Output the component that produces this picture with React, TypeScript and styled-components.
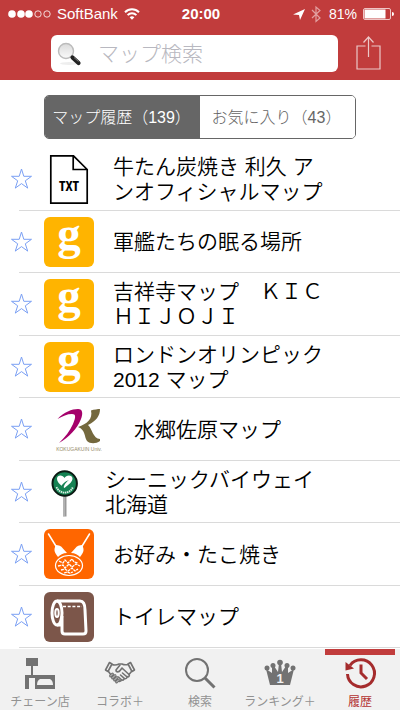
import React, { useState } from "react";
import styled, { createGlobalStyle } from "styled-components";

const FONT = `"Liberation Sans", "Noto Sans CJK JP", sans-serif`;
const RED = "#c13c3c";
const GRAY = "#666666";

const GlobalStyle = createGlobalStyle`
  *, *::before, *::after { box-sizing: border-box; }
  body { margin: 0; background: #fff; font-family: ${FONT}; }
  button, input { font: inherit; }
  svg { display: block; overflow: visible; }
`;

const Page = styled.div`
  min-height: 100vh;
  display: flex;
  flex-direction: column;
  background: #fff;
`;

const Header = styled.header`
  background: ${RED};
  height: 80px;
`;

const StatusBar = styled.div`
  height: 27px;
  padding: 0 6px 0 8px;
  display: grid;
  grid-template-columns: 1fr auto 1fr;
  align-items: center;
  color: #fff;
  font-size: 15px;
`;

const StatusGroup = styled.div<{ $end?: boolean }>`
  display: flex;
  align-items: center;
  gap: 6px;
  justify-content: ${(p) => (p.$end ? "flex-end" : "flex-start")};
`;

const Clock = styled.time`
  font-weight: 700;
`;

const Battery = styled.span`
  font-size: 14px;
`;

const SearchRow = styled.div`
  display: flex;
  align-items: center;
  gap: 18px;
  padding: 8px 19px 0 51px;
`;

const SearchBox = styled.label`
  flex: 1;
  min-width: 0;
  height: 37px;
  display: flex;
  align-items: center;
  gap: 17px;
  padding-left: 6px;
  background: #fff;
  border-radius: 6px;
`;

const SearchInput = styled.input`
  flex: 1;
  min-width: 0;
  height: 32px;
  border: 0;
  padding: 0;
  outline: 0;
  background: transparent;
  font-size: 21px;
  font-weight: 300;
  &::placeholder { color: #b8b8c0; opacity: 1; }
`;

const PlainButton = styled.button`
  border: 0;
  padding: 0;
  background: transparent;
  cursor: pointer;
`;

const Segments = styled.div`
  margin: 15px 44px 9px;
  height: 44px;
  display: flex;
  border: 1px solid ${GRAY};
  border-radius: 5px;
  overflow: hidden;
`;

const Segment = styled.button<{ $active: boolean }>`
  flex: 1;
  border: 0;
  padding: 0 2px 3px 0;
  white-space: nowrap;
  font-size: 16px;
  font-weight: 300;
  cursor: pointer;
  background: ${(p) => (p.$active ? GRAY : "#fff")};
  color: ${(p) => (p.$active ? "#fff" : GRAY)};
`;

const List = styled.ul`
  flex: 1;
  margin: 0;
  padding: 0 0 1px;
  list-style: none;
  display: grid;
  grid-auto-rows: 1fr;
`;

const Row = styled.li`
  min-height: 60px;
  display: flex;
  align-items: center;
  padding-left: 11px;
  background: linear-gradient(#dadada, #dadada) 19px 100% / 100% 1px no-repeat;
`;

const StarButton = styled(PlainButton)`
  width: 33px;
`;

const Thumb = styled.div<{ $narrow?: boolean }>`
  width: ${(p) => (p.$narrow ? 42 : 50)}px;
  height: 50px;
  flex: none;
`;

const Title = styled.a`
  margin-left: 19px;
  color: #000;
  text-decoration: none;
  white-space: pre;
  font-size: 21px;
  font-weight: 350;
  line-height: 25px;
`;

const TabBar = styled.nav`
  height: 61px;
  display: flex;
  background: #f1f1f1;
`;

const Tab = styled.button<{ $active: boolean }>`
  flex: 1;
  min-width: 0;
  border: 0;
  padding: 2px 0 0;
  display: flex;
  flex-direction: column;
  align-items: center;
  gap: 4px;
  white-space: nowrap;
  font-size: 12px;
  line-height: 18px;
  cursor: pointer;
  color: ${(p) => (p.$active ? "#b33232" : "#929292")};
  background: ${(p) =>
    p.$active ? `linear-gradient(${RED}, ${RED}) 50% 0 / 70px 6px no-repeat` : "transparent"};
`;

const TabIcon = styled.span<{ $active: boolean }>`
  padding-top: 6px;
  color: ${(p) => (p.$active ? "#a52c2d" : "#727272")};
`;

const SignalIcon = () => (
  <svg width="43" height="9" viewBox="0 0 43 9" fill="none" stroke="#fff" aria-hidden="true">
    {[4, 13, 21].map((x) => (
      <circle key={x} cx={x} cy="5" r="3.8" fill="#fff" stroke="none" />
    ))}
    <circle cx="30" cy="5" r="3.2" strokeWidth=".8" />
    <circle cx="39" cy="5" r="3.2" strokeWidth=".8" />
  </svg>
);

const WifiIcon = () => (
  <svg width="16" height="12" viewBox="0 0 16 12" fill="none" stroke="#fff" strokeWidth="2" aria-hidden="true">
    <path d="M1 4.2a10 10 0 0 1 14 0M3.6 7.1a6.3 6.3 0 0 1 8.8 0" />
    <path d="m8 11.8-2.4-2.6a3.6 3.6 0 0 1 4.8 0z" fill="#fff" stroke="none" />
  </svg>
);

const StatusIcons = () => (
  <svg width="29" height="16" viewBox="0 0 29 16" fill="none" aria-hidden="true">
    <path d="M11 3 6 14 5 9 -1 8.500z" fill="#fff" />
    <path d="m18 4 8 8-4 3.500V1l4 3.500-8 7.500" stroke="#e2a0a0" strokeWidth="1.200" />
  </svg>
);

const BatteryIcon = () => (
  <svg width="31" height="12" viewBox="0 0 31 12" aria-hidden="true">
    <rect x=".5" y=".5" width="27" height="11" rx="1.500" fill="none" stroke="#efc5c5" />
    <rect x="1.500" y="1.500" width="21" height="9" fill="#fff" />
    <path d="M29 4q2 0 2 2t-2 2z" fill="#fff" />
  </svg>
);

const Magnifier = () => (
  <svg width="24" height="24" viewBox="0 0 24 24" aria-hidden="true">
    <defs>
      <linearGradient id="lens" x1="0" y1="0" x2="0" y2="1">
        <stop offset="0" stopColor="#dadada" />
        <stop offset="1" stopColor="#fafafa" />
      </linearGradient>
    </defs>
    <ellipse cx="12" cy="21.500" rx="9" ry="1.500" fill="#eee" />
    <path d="m14 14 3 3" stroke="#888" strokeWidth="2" />
    <circle cx="9" cy="9" r="7.500" fill="url(#lens)" stroke="#bbb" strokeWidth="1.400" />
    <path d="m15.500 15.500 6 5.500" stroke="#222" strokeWidth="4.200" strokeLinecap="round" />
    <path d="m17 15.500 4.500 4" stroke="#888" strokeWidth=".8" />
  </svg>
);

const ShareIcon = () => (
  <svg width="25" height="34" viewBox="0 0 25 34" fill="none" stroke="#ecc8c8" strokeWidth="1.200" aria-hidden="true">
    <path d="M9.500 9H1v23h23V9h-8.500M12.500 20V0M7.500 5.500l5-5.500 5 5.500" />
  </svg>
);

const StarIcon = () => (
  <svg width="21" height="20" viewBox="0 0 21 20" fill="none" stroke="#7ba0f4" strokeWidth="1" aria-hidden="true">
    <path d="m10.500 0 2.300 7.300h7.700l-6.200 4.500 2.400 7.300-6.200-4.500-6.200 4.500 2.400-7.300L.5 7.300h7.700z" />
  </svg>
);

const TextFileArt = () => (
  <svg width="50" height="50" viewBox="0 0 50 50" aria-hidden="true">
    <path d="M6.800 1.800H29.500L43.200 15.500V49.200H6.800zM29.200 2v13.500H43" fill="#fff" stroke="#000" strokeWidth="1.700" />
    <text x="25" y="37" textAnchor="middle" fontFamily="'Liberation Sans Narrow', 'Open Sans Condensed', 'DejaVu Sans Condensed', sans-serif" fontSize="15" fontWeight="700">TXT</text>
  </svg>
);

const GArt = () => (
  <svg width="50" height="50" viewBox="0 0 50 50" aria-hidden="true">
    <rect width="50" height="50" rx="6" fill="#ffb400" />
    <text x="25" y="32" textAnchor="middle" fontFamily="'Liberation Serif', serif" fontSize="47" fontWeight="700" fill="#fff">g</text>
  </svg>
);

const UniversityArt = () => (
  <svg width="50" height="50" viewBox="0 0 50 50" aria-hidden="true">
    <path d="M13.500 15C20 8 28 5 34 5c5 0 5 5 3 10-4 10-12 18-22 24 6-6 11-12 14-19 3-7 3-10-1-10-5 0-9 2-14.500 5z" fill="#a5006b" />
    <path d="M47 6.500c3-1 7-1.500 9-1.500 0 7-4 12-12 16 4 3 5 14 12 14v2c-4 3-10 3-13 0-3-4-1-11-9-14 9-3 15-8 13-16.500z" fill="#74683d" />
    <text x="35" y="47" textAnchor="middle" fontFamily="'Liberation Sans', sans-serif" fontSize="5" fill="#958a69">KOKUGAKUIN Univ.</text>
  </svg>
);

const BywayArt = () => (
  <svg width="42" height="50" viewBox="0 0 42 50" aria-hidden="true">
    <path d="M19 29h3.500v20.500H19z" fill="#999" />
    <path d="M20 29v20" stroke="#ccc" />
    <circle cx="20.700" cy="16.500" r="12.200" fill="#158253" stroke="#0b1a13" strokeWidth="2" />
    <path d="M20.500 21C15 17 13 14.500 13 11.500c0-4 6-4 7.500-.5 1.500-3.500 8-3.500 8 .5 0 3-3 5.500-8 9.500z" fill="#fff" />
    <path d="M16 22c2-5 4-7 9-9-4 3-5 5-6 10z" fill="#158253" />
    <path d="M12.500 20c3 7 13 8 16.500 0" fill="none" stroke="#d7eee2" strokeWidth="1.800" strokeDasharray="1.500 .6" />
  </svg>
);

const OkonomiyakiArt = () => (
  <svg width="50" height="50" viewBox="0 0 50 50" fill="none" stroke="#fff" aria-hidden="true">
    <rect width="50" height="50" rx="6" fill="#ff6600" stroke="none" />
    <path d="m4.500 5 8 13M45.500 5l-8 13" strokeWidth="1.500" strokeLinecap="round" />
    <path d="M11.500 16c3 0 6 1 7 3l4.500 5c-4 0-7 2-9 4-2-3-4-5-3.500-8zM38.500 16c-3 0-6 1-7 3L27 24c4 0 7 2 9 4 2-3 4-5 3.500-8z" fill="#fff" stroke="none" />
    <ellipse cx="25" cy="36.500" rx="13.500" ry="10" strokeWidth="1.200" />
    <path d="m15 32 4 2 2-3 3 3 4-4 2 3 4 1M14 37l5-1 2 3 4-4 3 3 4-3 4 2M17 41l4-1 3 2 4-3 3 3 3-2M20 44l3-1 3 1 3-1" strokeWidth="1.300" strokeDasharray="3 .7" />
  </svg>
);

const ToiletArt = () => (
  <svg width="50" height="50" viewBox="0 0 50 50" fill="none" stroke="#fff" strokeWidth="3" aria-hidden="true">
    <rect width="50" height="50" rx="6" fill="#7c564a" stroke="none" />
    <ellipse cx="13" cy="21" rx="5" ry="12" />
    <ellipse cx="13" cy="21" rx="1.700" ry="4" strokeWidth="2" />
    <path d="M13 9h23c4 0 5 4 5 9l1 21q0 3-3 3H21q-3 0-3-3V24M13 33h5" />
    <path d="M19 14.500h19" strokeWidth="1.500" strokeDasharray="3 1.700" />
  </svg>
);

const StoreIcon = () => (
  <svg width="32" height="32" viewBox="0 0 32 32" fill="currentColor" aria-hidden="true">
    <path d="M2 1h12v8H9v9h22v14H11V21H5v11H1V18h6V9H2z" />
    <path d="M13 28h16c0-3-1-5-3-6H16c-2 1-3 3-3 6z" fill="#f1f1f1" />
  </svg>
);

const HandshakeIcon = () => (
  <svg width="32" height="32" viewBox="0 0 32 32" fill="none" stroke="currentColor" strokeWidth="1.600" strokeLinejoin="round" strokeLinecap="round" aria-hidden="true">
    <path d="m5.500 5.500-4 7.500 2.500 1.500L8 7zM26.500 5.500l4 7.500-2.500 1.500L24 7z" />
    <path d="M8 7.500c3 1 5 .5 7-.5h3c2 1 4 1 6 .5M4.500 14.500 7 18M27.500 14.500 25 17.500" />
    <path d="m16 8-4 5c0 2.500 3 2.500 4.500 0L18 11l7 6.500c1 1.500-.5 3-2 2 .5 1.500-1.500 3-2.800 1.700.3 1.700-1.700 2.500-3 1.300.3 2-2.200 2.500-3.500 1M18.500 16l4 3.500M16.500 18l3.500 3.200M14.500 20l2.700 2.500" />
    <path d="m6.500 19 2-2M8.500 21l2.500-2.500M10.500 23l2.500-2.500M12.500 25l2-2" strokeWidth="3" />
    <path d="m6.500 19 2-2M8.500 21l2.500-2.500M10.500 23l2.500-2.500M12.500 25l2-2" stroke="#f1f1f1" strokeWidth=".7" />
  </svg>
);

const FindIcon = () => (
  <svg width="32" height="32" viewBox="0 0 32 32" fill="none" stroke="currentColor" aria-hidden="true">
    <circle cx="13" cy="13" r="11" strokeWidth="2" />
    <path d="m21 21 9.500 9.500" strokeWidth="3" />
  </svg>
);

const CrownIcon = () => (
  <svg width="32" height="32" viewBox="0 0 32 32" fill="currentColor" aria-hidden="true">
    <path d="m2 12 6 4V9h2l4 6 1-9h2l1 9 4-6h2v7l6-4-4 16H6z" />
    <circle cx="3" cy="11" r="2.500" />
    <circle cx="9" cy="8.500" r="2.500" />
    <circle cx="16" cy="5.500" r="2.800" />
    <circle cx="23" cy="8.500" r="2.500" />
    <circle cx="29" cy="11" r="2.500" />
    <text x="16" y="26" textAnchor="middle" fontFamily="'Liberation Sans', sans-serif" fontSize="13" fontWeight="700" fill="#f1f1f1">1</text>
  </svg>
);

const HistoryIcon = () => (
  <svg width="32" height="32" viewBox="0 0 32 32" fill="none" stroke="currentColor" strokeWidth="3" aria-hidden="true">
    <path d="M3.500 17A13.500 13.500 0 1 0 6 8.500" />
    <path d="M1.500 5v8.500l8.500-2z" fill="currentColor" stroke="none" />
    <path d="M17 7.500V16l6 6" />
  </svg>
);

type Item = { title: string; art: () => React.ReactElement; narrow?: boolean };

const ITEMS: Item[] = [
  { title: "牛たん炭焼き 利久 ア\nンオフィシャルマップ", art: TextFileArt },
  { title: "軍艦たちの眠る場所", art: GArt },
  { title: "吉祥寺マップ　ＫＩＣ\nＨＩＪＯＪＩ", art: GArt },
  { title: "ロンドンオリンピック\n2012 マップ", art: GArt },
  { title: "　水郷佐原マップ", art: UniversityArt },
  { title: "シーニックバイウェイ\n北海道", art: BywayArt, narrow: true },
  { title: "お好み・たこ焼き", art: OkonomiyakiArt },
  { title: "トイレマップ", art: ToiletArt },
];

const SEGMENTS = ["マップ履歴（139）", "お気に入り（43）"];

const TABS = [
  { label: "チェーン店", icon: StoreIcon },
  { label: "コラボ＋", icon: HandshakeIcon },
  { label: "検索", icon: FindIcon },
  { label: "ランキング＋", icon: CrownIcon },
  { label: "履歴", icon: HistoryIcon },
];

export default function App() {
  const [segment, setSegment] = useState(0);
  const [tab, setTab] = useState(4);

  return (
    <Page lang="ja">
      <GlobalStyle />
      <Header>
        <StatusBar>
          <StatusGroup>
            <SignalIcon />
            <span>SoftBank</span>
            <WifiIcon />
          </StatusGroup>
          <Clock>20:00</Clock>
          <StatusGroup $end>
            <StatusIcons />
            <Battery>81%</Battery>
            <BatteryIcon />
          </StatusGroup>
        </StatusBar>
        <SearchRow>
          <SearchBox>
            <Magnifier />
            <SearchInput type="search" placeholder="マップ検索" aria-label="マップ検索" />
          </SearchBox>
          <PlainButton aria-label="共有">
            <ShareIcon />
          </PlainButton>
        </SearchRow>
      </Header>
      <Segments>
        {SEGMENTS.map((label, i) => (
          <Segment key={label} $active={segment === i} aria-pressed={segment === i} onClick={() => setSegment(i)}>
            {label}
          </Segment>
        ))}
      </Segments>
      <List>
        {ITEMS.map(({ title, art: Art, narrow }) => (
          <Row key={title}>
            <StarButton aria-label="お気に入り">
              <StarIcon />
            </StarButton>
            <Thumb $narrow={narrow}>
              <Art />
            </Thumb>
            <Title href="#">{title}</Title>
          </Row>
        ))}
      </List>
      <TabBar>
        {TABS.map(({ label, icon: Icon }, i) => (
          <Tab key={label} $active={tab === i} onClick={() => setTab(i)}>
            <TabIcon $active={tab === i}>
              <Icon />
            </TabIcon>
            {label}
          </Tab>
        ))}
      </TabBar>
    </Page>
  );
}
